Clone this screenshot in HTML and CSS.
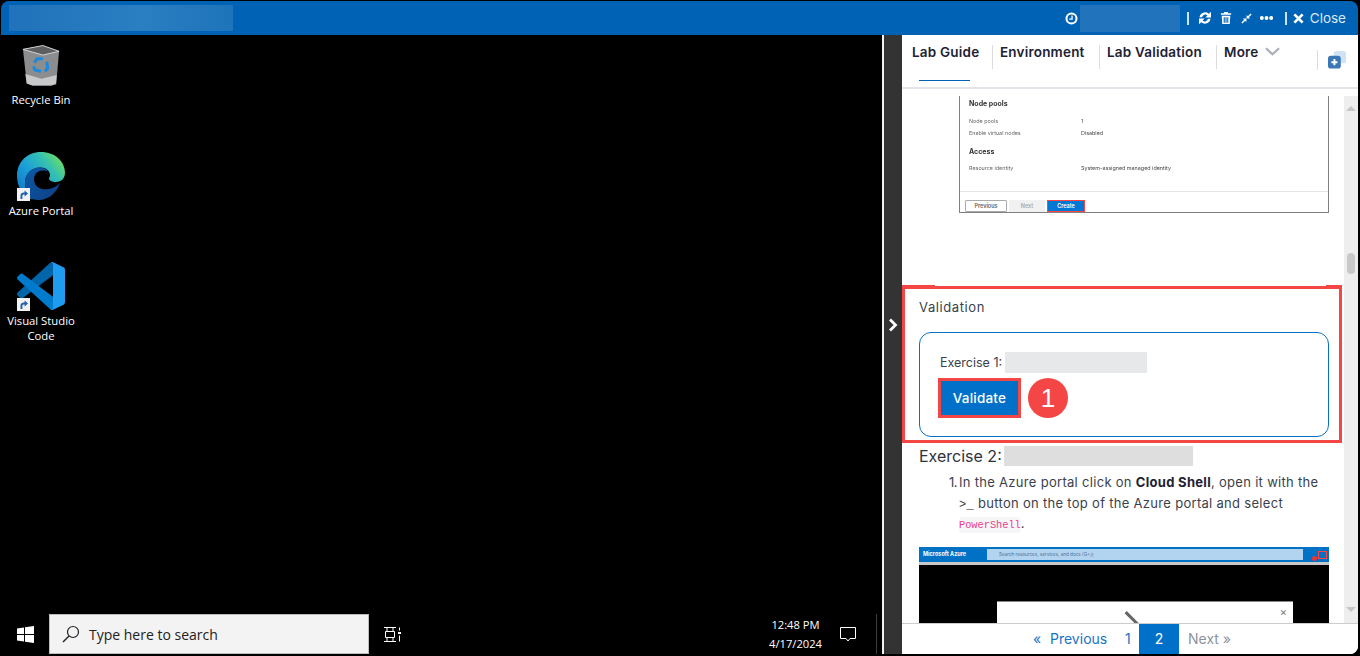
FILE: index.html
```html
<!DOCTYPE html>
<html lang="en">
<head>
<meta charset="utf-8">
<title>Lab</title>
<link rel="stylesheet" href="styles.css">
</head>
<body>
<div class="app">
  <header class="topbar">
    <div class="blur blur-title"></div>
    <div class="top-tools">
      <svg class="ti ti-clock" viewBox="0 0 14 14"><circle cx="7" cy="7" r="5.4" fill="none" stroke="#fff" stroke-width="2.200"/><path d="M7.600 3.800v3.800H4.600" fill="none" stroke="#fff" stroke-width="1.400"/></svg>
      <div class="blur blur-timer"></div>
      <span class="tsep tsep-a"></span>
      <svg class="ti ti-refresh" viewBox="0 0 14 14"><path d="M1.500 6.200a5.600 5.600 0 0 1 9.300-3.500L13 .8v5.700H7.400l2-2a3.100 3.100 0 0 0-5.300 1.700zM12.500 7.800a5.600 5.600 0 0 1-9.300 3.500L1 13.200V7.500h5.600l-2 2a3.100 3.100 0 0 0 5.300-1.700z" fill="#fff"/></svg>
      <svg class="ti ti-trash" viewBox="0 0 14 14"><path d="M5 0h4l.6 1.400H13v1.800H1V1.400h3.400zM2 4.400h10l-.6 9.600H2.600zM4.300 6v6.400h1.300V6zm2.100 0v6.400h1.300V6zm2.100 0v6.400h1.200V6z" fill="#fff" fill-rule="evenodd"/></svg>
      <svg class="ti ti-compress" viewBox="0 0 14 14"><path d="M13.500 1.800L10 5.300l1.600 1.600H7.100V2.400l1.600 1.600L12.200.5zM.5 12.200L4 8.700 2.400 7.100h4.500v4.500L5.300 10l-3.500 3.500z" fill="#fff"/></svg>
      <svg class="ti ti-dots" viewBox="0 0 14 6"><circle cx="2" cy="3" r="2.100" fill="#fff"/><circle cx="7" cy="3" r="2.100" fill="#fff"/><circle cx="12" cy="3" r="2.100" fill="#fff"/></svg>
      <span class="tsep tsep-b"></span>
      <svg class="ti ti-x" viewBox="0 0 12 12"><path d="M1.500 1.500l9 9M10.500 1.500l-9 9" stroke="#fff" stroke-width="3" fill="none"/></svg>
      <span class="close-label">Close</span>
    </div>
  </header>

  <main class="main">
    <section class="desktop">
      <div class="icons">
        <div class="desk-icon">
          <svg class="bin" viewBox="0 0 40 44">
            <path d="M1 5L22 1l17 6-3 35-5 1H11l-6-2z" fill="#8b8d8e"/>
            <path d="M1 5L22 1l17 6-17 4z" fill="#5c5e60" stroke="#d5d6d6" stroke-width="1"/>
            <path d="M3.500 31l17 5 16-4-.7 9-5 2H11l-6-2z" fill="#c6c8c9"/>
            <g fill="none" stroke="#1e88dc" stroke-width="3.200">
              <path d="M13 19l3-4 6 0"/><path d="M26 18l1 7-3 3"/><path d="M20 28l-6-1-2-4"/>
            </g>
          </svg>
          <span class="desk-label">Recycle Bin</span>
        </div>
        <div class="desk-icon">
          <div class="glyph">
            <svg class="edge" viewBox="0 0 48 48">
              <defs>
                <linearGradient id="eg1" x1="0" y1="1" x2="1" y2="0.200"><stop offset="0" stop-color="#0d6fbf"/><stop offset=".45" stop-color="#1c9fd8"/><stop offset=".75" stop-color="#35c1b0"/><stop offset="1" stop-color="#6fe05e"/></linearGradient>
                <linearGradient id="eg2" x1="0" y1="0" x2="1" y2="1"><stop offset="0" stop-color="#0c5aa6"/><stop offset="1" stop-color="#0f3f86"/></linearGradient>
              </defs>
              <path d="M24 0c14 0 24 9.500 24 21 0 5-3.500 9-9 9-4 0-7-1.500-7-3.500 0-1 1-1.500 1-3.500 0-4-4-7.500-9.500-7.500C14 15.500 8 22 8 31c0 6 2 12 8 16.500C6 45 0 35 0 24 0 10 10 0 24 0z" fill="url(#eg1)"/>
              <path d="M8 31c0-9 6-15.500 14.500-15.500 4 0 7 1.600 8.500 4-5-2.500-14-1-14 8 0 8 8 11 15 9.500 5-1 9-3.500 11-6-3 9-11 17-21 17-2 0-4-.3-6.500-1C10 43 8 37 8 31z" fill="url(#eg2)"/>
            </svg>
            <svg class="shortcut" viewBox="0 0 13 13"><rect width="13" height="13" fill="#f2f2f2"/><path d="M3.500 11V7.500C3.500 5.500 5 4.500 7 4.500h.6V2.500L11 5.500 7.600 8.500V6.500H7c-1 0-1.600.5-1.600 1.500V11z" fill="#1f5fae"/></svg>
          </div>
          <span class="desk-label">Azure Portal</span>
        </div>
        <div class="desk-icon">
          <div class="glyph">
            <svg class="vscode" viewBox="0 0 100 100">
              <path d="M96.46 10.8L75.86.88C73.47-.27 70.62.21 68.75 2.08L1.3 63.58c-1.81 1.66-1.81 4.51.01 6.17l5.5 5c1.48 1.35 3.72 1.45 5.32.24L93.36 13.37C96.09 11.3 100 13.25 100 16.67v-.24c0-2.4-1.38-4.59-3.54-5.63z" fill="#0065a9"/>
              <path d="M96.46 89.2l-20.6 9.92c-2.39 1.15-5.24.67-7.11-1.21L1.3 36.42c-1.81-1.66-1.81-4.51.01-6.17l5.5-5c1.48-1.35 3.72-1.45 5.32-.24l81.23 61.62c2.73 2.07 6.64.12 6.64-3.3v.24c0 2.4-1.38 4.59-3.54 5.63z" fill="#007acc"/>
              <path d="M75.86 99.13c-2.39 1.15-5.24.66-7.11-1.21 2.31 2.31 6.25.67 6.25-2.59V4.67c0-3.26-3.94-4.89-6.25-2.59 1.87-1.87 4.72-2.36 7.11-1.21l20.6 9.91c2.16 1.04 3.54 3.23 3.54 5.63v67.17c0 2.4-1.38 4.59-3.54 5.63z" fill="#1f9cf0"/>
            </svg>
            <svg class="shortcut" viewBox="0 0 13 13"><rect width="13" height="13" fill="#f2f2f2"/><path d="M3.500 11V7.500C3.500 5.500 5 4.500 7 4.500h.6V2.500L11 5.500 7.600 8.500V6.500H7c-1 0-1.600.5-1.600 1.500V11z" fill="#1f5fae"/></svg>
          </div>
          <span class="desk-label">Visual Studio Code</span>
        </div>
      </div>

      <footer class="taskbar">
        <svg class="win" viewBox="0 0 17 17"><path d="M0 2.500l7-1v6.500H0zM8 1.300L17 0v8H8zM0 9h7v6.500l-7-1zM8 9h9v8l-9-1.300z" fill="#fff"/></svg>
        <div class="search">
          <svg class="lens" viewBox="0 0 18 18"><circle cx="11" cy="7" r="5.500" fill="none" stroke="#222" stroke-width="1.200"/><path d="M7 11l-6 6" stroke="#222" stroke-width="1.400"/></svg>
          <span>Type here to search</span>
        </div>
        <svg class="taskview" viewBox="0 0 17 15"><path d="M0 .5h12M0 14.500h12M1.500 4.500h9v6h-9zM3 .5v4M9 .5v4M3 10.500v4M9 10.500v4M15.500 .5v3M15.500 8.500v6" fill="none" stroke="#fff" stroke-width="1"/><rect x="14" y="5" width="3" height="2" fill="#fff"/></svg>
        <div class="clock"><span>12:48 PM</span><span>4/17/2024</span></div>
        <svg class="notify" viewBox="0 0 16 15"><path d="M.5.500h15v11h-5.500L8 14l-2-2.500H.5z" fill="none" stroke="#fff" stroke-width="1"/></svg>
        <span class="tray-line"></span>
      </footer>
    </section>

    <div class="splitter">
      <svg class="chev" viewBox="0 0 10 14"><path d="M2 1.500L7.500 7 2 12.500" fill="none" stroke="#fff" stroke-width="2.800"/></svg>
    </div>

    <section class="panel">
      <nav class="tabs">
        <div class="tab tab-guide">Lab Guide</div>
        <div class="tab tab-env">Environment</div>
        <div class="tab tab-val">Lab Validation</div>
        <div class="tab tab-more">More <svg class="more-chev" viewBox="0 0 16 9"><path d="M1 1l7 6.500L15 1" fill="none" stroke="#a9aeb8" stroke-width="2.400"/></svg></div>
        <div class="tab-end">
          <svg class="split-ic" viewBox="0 0 19 19"><rect x="6" y="0" width="13" height="13" rx="3" fill="#cfe3f5"/><rect x="0" y="5" width="13.500" height="13.500" rx="3" fill="#3b76b5"/><path d="M6.800 8.500v6.500M3.500 11.800H10" stroke="#fff" stroke-width="2"/></svg>
        </div>
      </nav>

      <div class="body">
        <div class="content">
          <div class="shot">
            <h5 class="shot-h">Node pools</h5>
            <div class="shot-row shot-row1"><span>Node pools</span><span>1</span></div>
            <div class="shot-row"><span>Enable virtual nodes</span><span>Disabled</span></div>
            <h5 class="shot-h shot-h2">Access</h5>
            <div class="shot-row shot-row3"><span>Resource identity</span><span>System-assigned managed identity</span></div>
            <div class="shot-foot">
              <span class="sb sb-prev">Previous</span>
              <span class="sb sb-next">Next</span>
              <span class="sb sb-create">Create</span>
            </div>
          </div>

          <div class="callout">
            <div class="val-title">Validation</div>
            <div class="val-box">
              <div class="ex-line">Exercise 1: <span class="blur-ex1"></span></div>
              <div class="val-actions">
                <button class="validate">Validate</button>
                <span class="badge">1</span>
              </div>
            </div>
          </div>

          <h3 class="ex2">Exercise 2: <span class="blur-ex2"></span></h3>
          <ol class="steps">
            <li>In the Azure portal click on <b>Cloud Shell</b>, open it with the <span class="prompt">&gt;_</span> button on the top of the Azure portal and select <code>PowerShell</code>.</li>
          </ol>

          <div class="azure">
            <div class="az-bar">
              <span class="az-brand">Microsoft Azure</span>
              <span class="az-search">Search resources, services, and docs (G+/)</span>
              <span class="az-dot"></span>
              <span class="az-shell"></span>
            </div>
            <div class="az-black">
              <div class="az-dialog"><span class="az-handle"></span><span class="az-x">×</span></div>
            </div>
          </div>
        </div>
        <div class="scrollbar">
          <span class="arrow-up"></span>
          <span class="thumb"></span>
          <span class="arrow-down"></span>
        </div>
      </div>

      <footer class="pager">
        <span class="pg pg-lq">«</span>
        <span class="pg pg-prev">Previous</span>
        <span class="pg pg-1">1</span>
        <span class="pg pg-2">2</span>
        <span class="pg pg-next">Next »</span>
      </footer>
    </section>
  </main>
</div>
</body>
</html>
```

FILE: styles.css
```css
* { box-sizing: border-box; }
html, body { margin: 0; height: 100%; background: #000; overflow: hidden; }
body { font-family: "Inter", "Liberation Sans", sans-serif; }

.app { width: 1360px; height: 656px; padding: 1px 2px 2px 1px; display: flex; flex-direction: column; background: #000; }

/* Top bar */
.topbar { height: 34px; flex: none; background: #0062b4; border-radius: 8px 8px 0 0; display: flex; align-items: center; justify-content: space-between; padding-left: 8px; }
.blur { background: #2174bb; }
.blur-title { width: 224px; height: 26px; background: linear-gradient(90deg, #2073ba, #2a7ec2 60%, #1e74ba); }
.top-tools { display: flex; align-items: center; height: 100%; padding-right: 12px; }
.ti { display: block; flex: none; }
.ti-clock { width: 13px; height: 13px; margin-right: 2px; }
.blur-timer { width: 100px; height: 27px; }
.tsep { width: 2px; height: 13px; background: #cfe2f3; flex: none; }
.tsep-a { margin-left: 7px; }
.ti-refresh { width: 14px; height: 14px; margin-left: 9px; }
.ti-trash { width: 12px; height: 12px; margin-left: 8px; }
.ti-compress { width: 11px; height: 11px; margin-left: 9px; }
.ti-dots { width: 13px; height: 6px; margin-left: 8px; }
.tsep-b { margin-left: 12px; }
.ti-x { width: 11px; height: 11px; margin-left: 6px; }
.close-label { margin-left: 6px; color: #dce8f5; font-size: 13.500px; }

/* Layout */
.main { flex: 1; display: flex; min-height: 0; }
.desktop { width: 881px; flex: none; display: flex; flex-direction: column; background: #000; }
.splitter { width: 20px; flex: none; background: #333; border-left: 2px solid #f2f2f2; display: flex; flex-direction: column; align-items: center; padding-top: 283px; }
.chev { width: 10px; height: 14px; display: block; }

/* Desktop icons */
.icons { padding-top: 8px; display: flex; flex-direction: column; width: 80px; }
.desk-icon { height: 110px; display: flex; flex-direction: column; align-items: center; color: #fff; font: 11.300px/15px "Open Sans", sans-serif; text-align: center; }
.desk-icon:first-child { height: 109px; }
.bin { width: 38px; height: 43px; display: block; margin: 1px 0 5px; }
.glyph { position: relative; width: 48px; height: 49px; margin-bottom: 2px; }
.edge, .vscode { width: 48px; height: 48px; display: block; }
.shortcut { position: absolute; left: 0; bottom: 0; width: 13px; height: 13px; }
.desk-label { width: 72px; }

/* Taskbar */
.taskbar { margin-top: auto; height: 40px; display: flex; align-items: center; color: #fff; }
.win { width: 17px; height: 17px; margin-left: 16px; flex: none; }
.search { width: 320px; height: 40px; margin-left: 15px; background: #f3f3f3; border: 1px solid #bdbdbd; display: flex; align-items: center; padding-left: 12px; color: #222; font: 14px "Open Sans", sans-serif; flex: none; }
.lens { width: 18px; height: 18px; margin-right: 9px; }
.taskview { width: 17px; height: 15px; margin-left: 15px; flex: none; }
.clock { margin-left: auto; margin-right: 18px; display: flex; flex-direction: column; align-items: center; font: 11.200px/19px "Open Sans", sans-serif; }
.notify { width: 16px; height: 15px; margin-right: 20px; flex: none; }
.tray-line { width: 1px; height: 40px; background: #3c3c3c; margin-right: 5px; }

/* Panel */
.panel { flex: 1; min-width: 0; background: #fff; display: flex; flex-direction: column; border-radius: 0 0 8px 0; overflow: hidden; }
.tabs { height: 54px; flex: none; display: flex; align-items: flex-start; border-bottom: 2px solid #e2e4ea; padding-left: 10px; position: relative; font-size: 13.500px; font-weight: 600; letter-spacing: .2px; color: #1d2233; }
.tab { height: 24px; margin-top: 10px; line-height: 14px; white-space: nowrap; }
.tab-guide { width: 81px; border-right: 1px solid #dcdcdc; }
.tab-env { width: 107px; padding-left: 7px; border-right: 1px solid #dcdcdc; }
.tab-val { width: 117px; padding-left: 7px; border-right: 1px solid #dcdcdc; }
.tab-more { padding-left: 7px; display: flex; align-items: flex-start; }
.tab-guide::after { content: ""; position: absolute; left: 17px; top: 45px; width: 51px; height: 1px; background: #0062b4; }
.more-chev { width: 15px; height: 9px; margin-left: 6px; margin-top: 2px; }
.tab-end { margin-left: auto; margin-right: 12px; margin-top: 15px; padding: 1px 0 0 10px; border-left: 1px solid #dcdcdc; height: 20px; }
.split-ic { width: 18px; height: 18px; display: block; }

.body { flex: 1; min-height: 0; display: flex; padding-top: 7px; }
.content { flex: 1; min-width: 0; overflow: hidden; }
.scrollbar { width: 14px; flex: none; background: #eeeeee; display: flex; flex-direction: column; align-items: center; }
.arrow-up { width: 0; height: 0; border: 5px solid transparent; border-bottom: 5px solid #c6c6c6; border-top: 0; margin-top: 10px; }
.thumb { width: 8px; height: 21px; border-radius: 4px; background: #c8c8c8; margin-top: 142px; }
.arrow-down { width: 0; height: 0; border: 5px solid transparent; border-top: 5px solid #c6c6c6; border-bottom: 0; margin-top: auto; margin-bottom: 11px; }

/* Scaled screenshot */
.shot { margin-left: 57px; width: 370px; height: 117px; border: 1px solid #808080; border-top: 0; padding: 0 0 0 9px; font-size: 5.400px; color: #666; position: relative; }
.shot-h { margin: 0; padding-top: 3px; font-size: 7px; line-height: 9px; font-weight: 700; color: #333; filter: blur(.3px); }
.shot-h2 { padding-top: 9px; }
.shot-row { display: flex; line-height: 9px; margin-top: 3px; filter: blur(.25px); }
.shot-row1 { margin-top: 9px; }
.shot-row3 { margin-top: 8px; }
.shot-row span:first-child { width: 112px; }
.shot-row span:last-child { color: #444; }
.shot-foot { position: absolute; left: 0; right: 0; bottom: 0; height: 21px; border-top: 1px solid #e5e5e5; display: flex; gap: 2px; padding: 8px 0 0 5px; }
.sb { height: 12px; font-size: 5.500px; font-weight: 600; line-height: 10px; text-align: center; }
.sb-prev { width: 42px; border: 1px solid #aaa; color: #666; border-radius: 1px; }
.sb-next { width: 36px; background: #f1f1f1; color: #aaa; line-height: 12px; }
.sb-create { width: 38px; background: #0078d4; color: #fff; border: 1px solid #f44; }

/* Callout */
.callout { margin-top: 73px; width: 440px; height: 157px; border: 3px solid #f54646; padding: 11px 0 0 14px; position: relative; }
.callout::before, .callout::after { content: ""; position: absolute; top: -4px; height: 1px; background: #f54646; }
.callout::before { left: -3px; width: 33px; }
.callout::after { right: -3px; width: 16px; }
.val-title { font-size: 13px; line-height: 15px; letter-spacing: .6px; color: #3a3f4b; }
.val-box { margin-top: 17px; width: 410px; height: 105px; border: 1px solid #0a70c4; border-radius: 12px; padding: 19px 0 0 20px; }
.ex-line { font-size: 12.500px; line-height: 21px; color: #3a3f4b; display: flex; align-items: center; gap: 3px; }
.blur-ex1 { width: 142px; height: 21px; background: #e7e8e9; display: block; }
.val-actions { display: flex; align-items: center; margin-top: 5px; margin-left: -2px; }
.validate { width: 83px; height: 40px; background: #0070c9; border: 3px solid #f54646; color: #fff; font: 500 13.500px "Inter", sans-serif; letter-spacing: .2px; padding: 0; }
.badge { width: 40px; height: 40px; border-radius: 50%; background: #f54646; color: #fff; font: 26px/40px "Liberation Sans", sans-serif; text-align: center; margin-left: 7px; }

/* Following text */
.ex2 { margin: 3px 0 0 17px; font-size: 16px; line-height: 20px; font-weight: 400; color: #2d3240; display: flex; align-items: center; gap: 2px; }
.blur-ex2 { width: 189px; height: 20px; background: #dedede; display: block; }
.steps { margin: 6px 0 0; padding: 0 20px 0 47px; font-size: 13px; line-height: 20.500px; letter-spacing: .3px; color: #3a3f4b; list-style: none; }
.steps li { padding-left: 10px; }
.steps li::before { content: "1."; display: inline-block; width: 10px; margin-left: -10px; letter-spacing: -.6px; }
.steps b { color: #1d2233; font-weight: 700; }
.prompt { font: 12px "Liberation Mono", monospace; }
.steps code { font: 10.300px "Liberation Mono", monospace; letter-spacing: 0; color: #e83e8c; background: #f6f6f8; border-radius: 4px; padding: 2px 0; }

.azure { margin: 13px 0 0 17px; width: 410px; }
.az-bar { height: 18px; background: #0072c6; border-bottom: 3px solid #c9c9c9; display: flex; align-items: center; padding: 0 2px 0 4px; color: #fff; font-size: 5.500px; position: relative; }
.az-brand { width: 64px; font-weight: 700; }
.az-search { width: 316px; height: 11px; background: #b3d4f1; color: #4d6f8f; font-size: 4.600px; line-height: 11px; padding-left: 12px; }
.az-dot { position: absolute; right: 12px; top: 9px; width: 5px; height: 5px; border-radius: 50%; background: #e33; }
.az-shell { position: absolute; right: 2px; top: 4px; width: 9px; height: 8px; border: 1px solid #f44; }
.az-black { height: 80px; background: #000; padding: 36px 0 0 78px; }
.az-dialog { width: 296px; height: 44px; background: #fff; border-top: 1px solid #888; position: relative; }
.az-x { position: absolute; right: 6px; top: 3px; font-size: 11px; line-height: 14px; color: #777; }
.az-handle { position: absolute; left: 126px; top: 15px; width: 18px; height: 3px; background: #666; transform: rotate(45deg); }

/* Pager */
.pager { height: 31px; flex: none; border-top: 1px solid #ccc; background: #fff; display: flex; align-items: stretch; font-size: 14px; line-height: 30px; color: #1a73c4; padding-left: 131px; }
.pg { display: block; }
.pg-lq { width: 17px; }
.pg-prev { width: 75px; }
.pg-1 { width: 14px; }
.pg-2 { width: 40px; background: #0070c9; color: #fff; text-align: center; }
.pg-next { margin-left: 9px; color: #8d939e; }
```
